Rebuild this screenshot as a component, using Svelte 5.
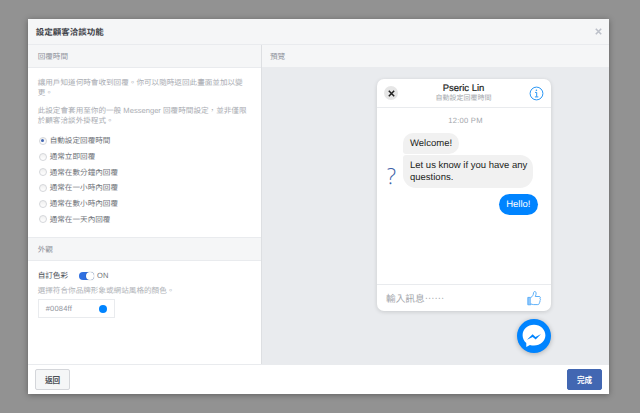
<script>
	const options = ['自動設定回覆時間', '通常立即回覆', '通常在數分鐘內回覆', '通常在一小時內回覆', '通常在數小時內回覆', '通常在一天內回覆'];
	let selected = $state(0);
	let customColor = $state(true);
</script>

<div class="backdrop">
	<div class="modal">
		<header class="title-bar">
			<h1>設定顧客洽談功能</h1>
			<button class="close" aria-label="關閉">
				<svg width="7" height="7" viewBox="0 0 7 7"><path d="M.8.8l5.4 5.4M6.2.8L.8 6.2" stroke="#bcc0c9" stroke-width="1.6" fill="none" /></svg>
			</button>
		</header>
		<div class="body">
			<section class="settings">
				<div class="section-head">回覆時間</div>
				<div class="pane reply">
					<p>讓用戶知道何時會收到回覆。你可以隨時返回此畫面並加以變更。</p>
					<p>此設定會套用至你的一般 Messenger 回覆時間設定，並非僅限於顧客洽談外掛程式。</p>
					<div class="options">
						{#each options as option, i}
							<label class="option">
								<button class="radio" class:on={selected === i} aria-label={option} onclick={() => (selected = i)}></button>
								<span>{option}</span>
							</label>
						{/each}
					</div>
				</div>
				<div class="section-head boxed">外觀</div>
				<div class="pane look">
					<div class="color-row">
						<span class="color-label">自訂色彩</span>
						<button class="toggle" class:on={customColor} aria-label="切換" onclick={() => (customColor = !customColor)}><i></i></button>
						<span class="on-label">ON</span>
					</div>
					<div class="hint">選擇符合你品牌形象或網站風格的顏色。</div>
					<div class="color-field">
						<span>#0084ff</span>
						<i></i>
					</div>
				</div>
			</section>
			<section class="preview">
				<div class="section-head compact">預覽</div>
				<div class="stage">
					<div class="chat">
						<div class="chat-head">
							<span class="chat-close">
								<svg width="7" height="7" viewBox="0 0 7 7"><path d="M.8.8l5.4 5.4M6.2.8L.8 6.2" stroke="#222" stroke-width="1.5" fill="none" /></svg>
							</span>
							<div class="who">
								<strong>Pseric Lin</strong>
								<small>自動設定回覆時間</small>
							</div>
							<svg class="info" width="15" height="15" viewBox="0 0 15 15" fill="none" stroke="#2b97f5">
								<circle cx="7.5" cy="7.5" r="6.400" stroke-width="1" />
								<path d="M6 6.400h1.700v4.300M5.900 10.900h3.400" stroke-width="1" />
								<circle cx="7.400" cy="4.200" r=".8" fill="#2b97f5" stroke="none" />
							</svg>
						</div>
						<div class="messages">
							<div class="time">12:00 PM</div>
							<div class="incoming">
								<span class="avatar">?</span>
								<div class="bubbles">
									<div class="bubble first">Welcome!</div>
									<div class="bubble last">Let us know if you have any questions.</div>
								</div>
							</div>
							<div class="bubble mine">Hello!</div>
						</div>
						<div class="composer">
							<span>輸入訊息⋯⋯</span>
							<svg width="15" height="16" viewBox="0 0 15 16">
								<path d="M.8 7.400h3v7.400h-3z" fill="#8ec7fb" stroke="#4aa6f7" stroke-width=".8" />
								<path d="M3.800 7.600c1.600-1 2.600-2.600 2.800-5 .1-1.400 2.300-1.500 2.500.3.1 1.200-.3 2.600-.8 3.600h3.800c1.500 0 1.700 1.700.8 2.200.8.500.7 1.800-.2 2.200.5.600.3 1.700-.5 2 .2 1-.4 1.700-1.400 1.700H6.600c-1.100 0-1.900-.4-2.800-.8" fill="#fff" stroke="#4aa6f7" stroke-width=".9" />
							</svg>
						</div>
					</div>
					<div class="launcher">
						<svg width="26" height="26" viewBox="0 0 26 26">
							<path d="M13 1.800C6.600 1.800 1.600 6.400 1.600 12.300c0 3.100 1.400 5.800 3.700 7.700v4l3.600-2c1.300.4 2.700.6 4.100.6 6.400 0 11.400-4.500 11.400-10.300S19.400 1.800 13 1.800z" fill="#fff" />
							<path d="M6 16.800l5.600-5.600 2.900 2.700 5.500-3-5.300 5.700-3-2.700z" fill="#0084ff" />
						</svg>
					</div>
				</div>
			</section>
		</div>
		<footer class="actions">
			<button class="btn">返回</button>
			<button class="btn primary">完成</button>
		</footer>
	</div>
</div>

<style>
	:global(body) { margin: 0; }
	.backdrop {
		width: 640px; height: 413px; box-sizing: border-box;
		padding: 19px 31px 19px 28px;
		background: #929292;
		font-family: "Liberation Sans", "Noto Sans CJK TC", sans-serif;
		text-rendering: geometricPrecision;
		overflow: hidden;
	}
	.modal {
		height: 100%;
		display: flex; flex-direction: column;
		background: #fff;
		box-shadow: 0 1px 6px rgba(0, 0, 0, .35);
	}
	button { font-family: inherit; padding: 0; cursor: pointer; }
	.title-bar {
		flex: 0 0 25px; box-sizing: content-box;
		display: flex; align-items: center; justify-content: space-between;
		padding: 0 7px 0 7.700px;
		background: #f5f6f7;
		border-bottom: 1px solid #e9ebee;
	}
	h1 { margin: 0; font-size: 8.500px; font-weight: 700; color: #3f4349; }
	.close { border: 0; background: none; display: flex; }
	.body { flex: 1; display: flex; min-height: 0; }
	.settings {
		width: 233px;
		display: flex; flex-direction: column;
		border-right: 1px solid #dddfe2;
	}
	.preview { flex: 1; display: flex; flex-direction: column; }
	.section-head {
		flex: 0 0 23px; box-sizing: border-box;
		display: flex; align-items: center;
		padding: 0 0 0 9.700px;
		background: #f5f6f7;
		border-bottom: 1px solid #e9ebee;
		font-size: 7.600px; color: #90949c;
	}
	.section-head.compact { padding-left: 8px; }
	.section-head.boxed { border-top: 1px solid #e9ebee; flex-basis: 24px; }
	.pane { padding: 0 9.700px; }
	.reply { height: 169px; padding-top: 10px; box-sizing: border-box; }
	.reply p {
		margin: 0;
		font-size: 7.600px; line-height: 10px; color: #a9acb2;
	}
	.reply p + p { margin-top: 8px; }
	.options { display: flex; flex-direction: column; margin-top: 7px; margin-left: 1px; }
	.option {
		height: 15.700px;
		display: flex; align-items: center; gap: 3px;
		font-size: 7.600px; color: #6f7379;
	}
	.radio {
		width: 8px; height: 8px; box-sizing: border-box;
		border-radius: 50%;
		border: 1px solid #d5d7da;
		background: linear-gradient(#f0f0f0, #fff);
		display: flex; align-items: center; justify-content: center;
	}
	.radio.on::after {
		content: '';
		width: 3px; height: 3px; border-radius: 50%;
		background: #4267b2;
	}
	.look { padding-top: 9px; }
	.color-row { display: flex; align-items: center; height: 11px; }
	.color-label { font-size: 7.600px; color: #4b4f56; width: 41.300px; }
	.toggle {
		width: 15px; height: 8px;
		border: 0; border-radius: 4px;
		background: #ccd0d5;
		position: relative;
	}
	.toggle.on { background: #2f6fe0; }
	.toggle i {
		position: absolute; left: 0; top: 0;
		width: 8px; height: 8px; border-radius: 50%;
		background: #fff;
		box-shadow: 0 0 1px rgba(0, 0, 0, .5);
	}
	.toggle.on i { left: 7px; }
	.on-label { margin-left: 3px; font-size: 7.500px; color: #6f7379; letter-spacing: .2px; }
	.hint { margin-top: 5px; font-size: 7.600px; line-height: 10px; color: #b0b3b8; }
	.color-field {
		margin-top: 3px;
		width: 77px; height: 19px; box-sizing: border-box;
		display: flex; align-items: center; justify-content: space-between;
		padding: 0 7px;
		border: 1px solid #e9ebee;
		font-size: 7.500px; color: #90949c;
		letter-spacing: .2px;
	}
	.color-field i { width: 8px; height: 8px; border-radius: 50%; background: #0084ff; }
	.stage {
		flex: 1; position: relative;
		background: #e9ebee;
		padding: 11px 58px 0 115px;
	}
	.chat {
		height: 232px;
		display: flex; flex-direction: column;
		background: #fff;
		border-radius: 7px;
		box-shadow: 0 1px 4px rgba(0, 0, 0, .14);
		color: #1c1e21;
	}
	.chat-head {
		flex: 0 0 28px;
		display: flex; align-items: center; justify-content: space-between;
		padding: 0 7px;
		border-bottom: 1px solid #e9ebee;
	}
	.chat-close {
		width: 14px; height: 14px; border-radius: 50%;
		background: #e6e6e6;
		display: flex; align-items: center; justify-content: center;
	}
	.who { display: flex; flex-direction: column; align-items: center; }
	.who strong { font-size: 9.500px; line-height: 11px; font-weight: 400; -webkit-text-stroke: .2px #1c1e21; }
	.who small { font-size: 7px; line-height: 8px; margin-top: 1px; color: #a3a6ab; }
	.messages { flex: 1; padding: 7px 13px 0 8px; display: flex; flex-direction: column; }
	.time { font-size: 7.600px; line-height: 11px; text-align: center; color: #a3a6ab; letter-spacing: .25px; margin-bottom: 7px; margin-right: -8px; }
	.incoming { display: flex; align-items: flex-end; }
	.avatar {
		width: 23px; margin-left: -5px;
		font-family: "Open Sans", sans-serif; font-size: 22px; line-height: 24px;
		color: #3f62a8;
		font-weight: 300;
		text-align: center;
	}
	.bubbles { display: flex; flex-direction: column; gap: 1px; align-items: flex-start; }
	.bubble {
		font-size: 9.500px; line-height: 12px;
		padding: 5px 7px;
		background: #f1f1f1;
		border-radius: 10px;
	}
	.bubble.first { border-bottom-left-radius: 3px; padding: 4.500px 7px; }
	.bubble.last { width: 130px; box-sizing: border-box; padding: 4.500px 4px 4.500px 7px; border-radius: 3px 13px 13px 13px; }
	.bubble.mine {
		align-self: flex-end;
		margin-top: 6px;
		padding: 4.500px 7.500px;
		background: #0084ff; color: #fff;
		border-radius: 11px;
	}
	.composer {
		flex: 0 0 26px;
		display: flex; align-items: center; justify-content: space-between;
		padding: 0 9px;
		border-top: 1px solid #e9ebee;
		font-size: 9.700px; color: #a3a6ab;
	}
	.launcher {
		position: absolute; right: 58px; bottom: 11px;
		width: 34px; height: 34px; border-radius: 50%;
		background: #0084ff;
		box-shadow: 0 1px 5px rgba(0, 0, 0, .25);
		display: flex; align-items: center; justify-content: center;
	}
	.actions {
		flex: 0 0 29px;
		display: flex; align-items: center; justify-content: space-between;
		padding: 0 7px;
		border-top: 1px solid #e9ebee;
	}
	.btn {
		width: 35px; height: 21px; box-sizing: border-box;
		border: 1px solid #d4d6da; border-radius: 2px;
		background: #f5f6f7;
		font-size: 7.600px; font-weight: 700; color: #4b4f56;
	}
	.btn.primary { background: #4267b2; border-color: #4267b2; color: #fff; }
</style>
